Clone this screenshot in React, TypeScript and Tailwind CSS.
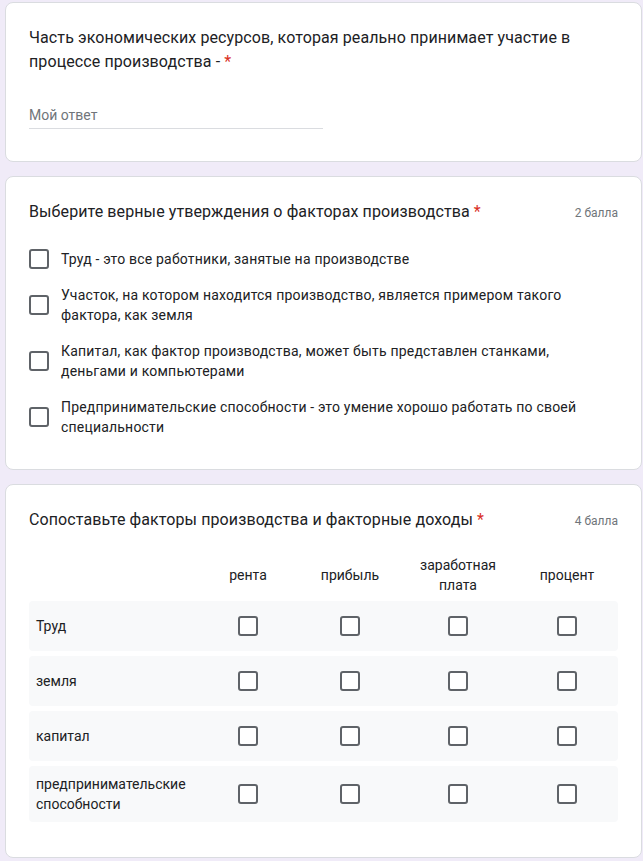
import React from 'react';

const OPTIONS = [
  'Труд - это все работники, занятые на производстве',
  'Участок, на котором находится производство, является примером такого фактора, как земля',
  'Капитал, как фактор производства, может быть представлен станками, деньгами и компьютерами',
  'Предпринимательские способности - это умение хорошо работать по своей специальности',
];

const COLUMNS = ['рента', 'прибыль', 'заработная плата', 'процент'];
const ROWS = ['Труд', 'земля', 'капитал', 'предпринимательские способности'];

const GRID = 'grid grid-cols-[167px_104px_100px_116px_102px]';

const Box = () => (
  <span className="block w-[20px] h-[20px] shrink-0 rounded-[3px] border-2 border-[#5f6368] bg-white" />
);

const Card: React.FC<{ children: React.ReactNode; className?: string }> = ({ children, className = '' }) => (
  <div className={`w-[637px] rounded-lg border border-[#dadce0] bg-white px-[23px] pt-[23px] ${className}`}>
    {children}
  </div>
);

const Title: React.FC<{ text: string; points?: string }> = ({ text, points }) => (
  <div className="flex items-baseline justify-between gap-4">
    <div className="text-[16px] leading-[24px] tracking-[0.1px] text-[#202124]">
      {text}
      <span className="text-[#d93025]">&nbsp;*</span>
    </div>
    {points && <div className="shrink-0 text-[12px] text-[#70757a]">{points}</div>}
  </div>
);

export default function App() {
  return (
    <div
      className="min-h-[861px] bg-[#f0ebf8] pl-[5px] pt-[2px] pb-4"
      style={{ fontFamily: 'Roboto, "Noto Sans", Arial, sans-serif' }}
    >
      <div className="flex flex-col gap-[14px]">
        <Card className="pb-[32px]">
          <Title text="Часть экономических ресурсов, которая реально принимает участие в процессе производства -" />
          <div className="mt-[31px] w-[294px] border-b border-[#dadce0] pb-[3px] text-[14px] leading-[20px] text-[#70757a]">
            Мой ответ
          </div>
        </Card>

        <Card className="pb-[32px]">
          <Title text="Выберите верные утверждения о факторах производства" points="2 балла" />
          <div className="mt-[25px] flex flex-col gap-4">
            {OPTIONS.map((o) => (
              <div key={o} className="flex items-center gap-3">
                <Box />
                <div className="max-w-[530px] text-[14px] leading-[20px] tracking-[0.2px] text-[#202124]">{o}</div>
              </div>
            ))}
          </div>
        </Card>

        <Card className="pb-[35px]">
          <Title text="Сопоставьте факторы производства и факторные доходы" points="4 балла" />
          <div className={`${GRID} mt-[23px] items-center`}>
            <div />
            {COLUMNS.map((c) => (
              <div key={c} className="px-1 text-center text-[14px] leading-[20px] text-[#202124]">
                {c.split(' ').map((w) => (
                  <div key={w}>{w}</div>
                ))}
              </div>
            ))}
          </div>
          <div className="mt-[6px] flex flex-col gap-[5px]">
            {ROWS.map((r) => (
              <div key={r} className={`${GRID} min-h-[50px] items-center rounded bg-[#f8f9fa] py-2`}>
                <div className="pl-[7px] pr-2 text-[14px] leading-[20px] text-[#202124]">{r}</div>
                {COLUMNS.map((c) => (
                  <div key={c} className="flex justify-center">
                    <Box />
                  </div>
                ))}
              </div>
            ))}
          </div>
        </Card>
      </div>
    </div>
  );
}
